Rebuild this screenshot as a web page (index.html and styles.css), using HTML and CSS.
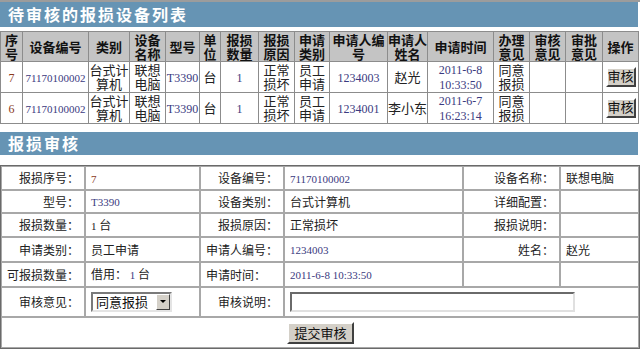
FILE: index.html
```html
<!DOCTYPE html>
<html lang="zh-CN">
<head>
    <meta charset="UTF-8">
    <title>报损审核</title>
    <link rel="stylesheet" href="styles.css">
</head>
<body>
<div class="page">
    <div class="bar">待审核的报损设备列表</div>
    <table class="list">
        <colgroup>
            <col style="width:22px"><col style="width:66px"><col style="width:41px"><col style="width:36px">
            <col style="width:34px"><col style="width:21px"><col style="width:38px"><col style="width:36px">
            <col style="width:35px"><col style="width:58px"><col style="width:40px"><col style="width:66px">
            <col style="width:36px"><col style="width:36px"><col style="width:37px"><col style="width:36px">
        </colgroup>
        <tr class="head">
            <th>序号</th><th>设备编号</th><th>类别</th><th>设备名称</th><th>型号</th><th>单位</th>
            <th>报损数量</th><th>报损原因</th><th>申请类别</th><th>申请人编号</th><th>申请人姓名</th>
            <th>申请时间</th><th>办理意见</th><th>审核意见</th><th>审批意见</th><th>操作</th>
        </tr>
        <tr class="row">
            <td><span class="num sn">7</span></td>
            <td><span class="num code">71170100002</span></td>
            <td>台式计算机</td>
            <td>联想电脑</td>
            <td><span class="num">T3390</span></td>
            <td>台</td>
            <td><span class="num">1</span></td>
            <td>正常损坏</td>
            <td>员工申请</td>
            <td><span class="num">1234003</span></td>
            <td>赵光</td>
            <td><span class="num">2011-6-8<br>10:33:50</span></td>
            <td>同意报损</td>
            <td></td>
            <td></td>
            <td><button class="btn small">审核</button></td>
        </tr>
        <tr class="row">
            <td><span class="num sn">6</span></td>
            <td><span class="num code">71170100002</span></td>
            <td>台式计算机</td>
            <td>联想电脑</td>
            <td><span class="num">T3390</span></td>
            <td>台</td>
            <td><span class="num">1</span></td>
            <td>正常损坏</td>
            <td>员工申请</td>
            <td><span class="num">1234001</span></td>
            <td>李小东</td>
            <td><span class="num">2011-6-7<br>16:23:14</span></td>
            <td>同意报损</td>
            <td></td>
            <td></td>
            <td><button class="btn small">审核</button></td>
        </tr>
    </table>

    <div class="bar bar-second">报损审核</div>
    <table class="form">
        <colgroup>
            <col style="width:84px"><col style="width:115px"><col style="width:84px">
            <col style="width:179px"><col style="width:97px"><col style="width:79px">
        </colgroup>
        <tr class="r1">
            <td class="lbl">报损序号：</td><td><span class="num sn">7</span></td>
            <td class="lbl">设备编号：</td><td><span class="num">71170100002</span></td>
            <td class="lbl">设备名称：</td><td>联想电脑</td>
        </tr>
        <tr class="r2">
            <td class="lbl">型号：</td><td><span class="num">T3390</span></td>
            <td class="lbl">设备类别：</td><td>台式计算机</td>
            <td class="lbl">详细配置：</td><td></td>
        </tr>
        <tr class="r3">
            <td class="lbl">报损数量：</td><td><span class="num dark">1</span> 台</td>
            <td class="lbl">报损原因：</td><td>正常损坏</td>
            <td class="lbl">报损说明：</td><td></td>
        </tr>
        <tr class="r4">
            <td class="lbl">申请类别：</td><td>员工申请</td>
            <td class="lbl">申请人编号：</td><td><span class="num">1234003</span></td>
            <td class="lbl">姓名：</td><td>赵光</td>
        </tr>
        <tr class="r5">
            <td class="lbl">可报损数量：</td><td>借用： <span class="num">1</span> 台</td>
            <td>申请时间：</td><td><span class="num">2011-6-8 10:33:50</span></td>
            <td></td><td></td>
        </tr>
        <tr class="r6">
            <td class="lbl">审核意见：</td>
            <td>
                <span class="select-wrap">
                    <select class="select">
                        <option>同意报损</option>
                        <option>不同意报损</option>
                    </select>
                    <span class="arrow"></span>
                </span>
            </td>
            <td class="lbl">审核说明：</td>
            <td colspan="3"><input type="text" class="text"></td>
        </tr>
        <tr class="r7">
            <td colspan="6" class="center"><button class="btn submit">提交审核</button></td>
        </tr>
    </table>
</div>
</body>
</html>
```

FILE: styles.css
```css
body {
    margin: 0;
    background-color: #fff;
    font-family: "Noto Sans CJK SC", sans-serif;
    font-size: 12px;
    line-height: 14px;
    color: #111;
}
.page {
    width: 640px;
    border-top: 2px solid #9c9c9c;
}
.bar {
    width: 630px;
    height: 25px;
    line-height: 25px;
    padding-left: 8px;
    background-color: #6694b4;
    color: #fff;
    font-size: 16px;
    font-weight: bold;
    letter-spacing: 2px;
}
.bar-second {
    margin-top: 8px;
    height: 23px;
    line-height: 23px;
}

/* list table */
.list {
    margin-top: 4px;
    width: 639px;
    table-layout: fixed;
    border-collapse: collapse;
    border: 1px solid #333;
}
.list th, .list td {
    border: 1px solid #8c8c8c;
    padding: 0;
    text-align: center;
    font-size: 13px;
    line-height: 14px;
}
.list th {
    background-color: #c4c4c4;
    font-weight: bold;
    color: #111;
}
.list td {
    color: #222;
}
.list .head { height: 30px; }
.list .row { height: 29px; }
.num {
    font-family: "Liberation Serif", serif;
    font-size: 11px;
    line-height: 12px;
    color: #3a3a80;
}
.list .num {
    font-size: 12px;
    line-height: 14px;
}
.list .num.code {
    font-size: 11px;
}
.num.sn {
    color: #8a3a1c;
}
.num.dark {
    color: #222;
}

/* form table */
.form {
    margin-top: 10px;
    width: 639px;
    table-layout: fixed;
    border-collapse: separate;
    border-spacing: 0;
    border: 1px solid #6a6a6a;
}
.form td {
    border: 1px solid #a8a8a8;
    padding: 0 4px 0 5px;
    font-size: 12px;
    line-height: 12px;
    color: #222;
    white-space: nowrap;
}
.form .lbl {
    text-align: right;
    padding-right: 5px;
}
.form .center {
    text-align: center;
}
.r1 { height: 24px; }
.r2 { height: 23px; }
.r3 { height: 24px; }
.r4 { height: 25px; }
.r5 { height: 25px; }
.r6 { height: 30px; }
.r7 { height: 31px; }

.select-wrap {
    position: relative;
    display: inline-block;
    vertical-align: middle;
    height: 20px;
}
.select {
    appearance: none;
    -webkit-appearance: none;
    display: block;
    width: 81px;
    height: 20px;
    margin: 0;
    padding: 0 0 0 3px;
    border: 2px solid;
    border-color: #7a7a7a #e4e4e4 #e4e4e4 #7a7a7a;
    border-radius: 0;
    background-color: #fff;
    font-family: "Noto Sans CJK SC", sans-serif;
    font-size: 13px;
    line-height: 16px;
    color: #111;
    box-sizing: border-box;
}
.arrow {
    position: absolute;
    top: 2px;
    right: 2px;
    width: 12px;
    height: 14px;
    background-color: #d4d0c8;
    border: 1px solid;
    border-color: #fff #404040 #404040 #fff;
    pointer-events: none;
}
.arrow::after {
    content: "";
    position: absolute;
    left: 3px;
    top: 5px;
    border-left: 3px solid transparent;
    border-right: 3px solid transparent;
    border-top: 3px solid #000;
}
.text {
    display: block;
    width: 285px;
    height: 20px;
    margin: 0;
    border: 2px solid;
    border-color: #6a6a6a #e0e0e0 #e0e0e0 #6a6a6a;
    box-sizing: border-box;
}

.btn {
    background-color: #d4d0c8;
    border: 2px solid;
    border-color: #fff #404040 #404040 #fff;
    font-family: "Noto Sans CJK SC", sans-serif;
    color: #111;
    padding: 0;
    cursor: pointer;
    box-sizing: border-box;
    vertical-align: middle;
}
.btn.small {
    width: 30px;
    height: 20px;
    padding-bottom: 2px;
    font-size: 13px;
    line-height: 14px;
}
.btn.submit {
    width: 67px;
    height: 22px;
    font-size: 13px;
    line-height: 16px;
}
```
